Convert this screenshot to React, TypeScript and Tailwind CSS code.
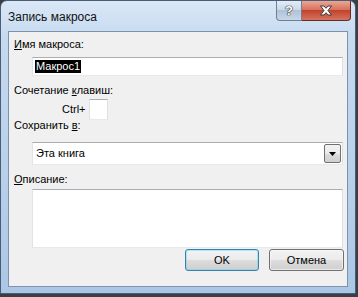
export default function App() {
  return (
    <div className="w-[358px] h-[297px] bg-[#3a3f45] overflow-hidden font-['Liberation_Sans',Arial,sans-serif]">
      <div className="w-[356px] h-[294px] rounded-t-[7px] border border-[#4b5d73] bg-[linear-gradient(180deg,#dae8f6_0%,#c6daf0_12%,#b8d0ea_60%,#abc7e6_100%)] flex flex-col">
        {/* Title bar */}
        <div className="h-[30px] flex items-start shrink-0">
          <div className="pl-[7px] pt-[8px] text-[12px] leading-[16px] text-[#111]">Запись макроса</div>
          <div className="ml-auto mr-[4px] flex">
            <div className="w-[26px] h-[20px] rounded-bl-[4px] border border-[#6f7f92] border-t-0 bg-[linear-gradient(180deg,#e4edf7_0%,#cbd9ea_45%,#b1c2d7_50%,#c8d6e8_100%)] flex items-center justify-center">
              <span className="text-[13px] font-bold leading-none text-white [text-shadow:0_0_1px_#222,0_0_1px_#222,0_0_1px_#222]">?</span>
            </div>
            <div className="w-[49px] h-[20px] rounded-br-[4px] border border-[#6a2a22] border-t-0 border-l-0 bg-[linear-gradient(180deg,#e9a795_0%,#d7735e_45%,#c2422c_50%,#d37661_100%)] flex items-center justify-center">
              <svg width="14" height="11" viewBox="0 0 14 11">
                <path d="M1.5 1h3.5l2 2.3L9 1h3.5L9 5.5l3.5 4.5H9L7 7.7 5 10H1.5L5 5.5z" fill="#fff" stroke="#3a3a3a" strokeWidth="1" strokeLinejoin="round" />
              </svg>
            </div>
          </div>
        </div>
        {/* Client area */}
        <div className="mx-[7px] h-[256px] border border-[#7e93ab] bg-[#f0f0f0] flex flex-col text-[11px] text-black">
          <div className="ml-[5px] mt-[5px] leading-[15px]"><u>И</u>мя макроса:</div>
          <div className="ml-[23px] mt-[5px] w-[311px] h-[19px] border border-[#abadb3] border-b-[#e3e9ef] border-l-[#e2e3ea] border-r-[#dbdfe6] bg-white flex items-center pl-[2px]">
            <span className="bg-black text-white leading-[13px] px-[1px]">Макрос1</span>
          </div>
          <div className="ml-[5px] mt-[7px] leading-[15px]">Сочетание <u>к</u>лавиш:</div>
          <div className="ml-[53px] mt-[1px] flex items-center">
            <span className="leading-[15px]">Ctrl+</span>
            <div className="ml-[3px] w-[19px] h-[21px] border border-[#abadb3] border-b-[#e3e9ef] border-l-[#e2e3ea] border-r-[#dbdfe6] bg-white"></div>
          </div>
          <div className="ml-[5px] -mt-[2px] leading-[15px]">Сохранить <u>в</u>:</div>
          <div className="ml-[23px] mt-[9px] w-[311px] h-[23px] border border-[#abadb3] border-b-[#e3e9ef] border-l-[#e2e3ea] border-r-[#dbdfe6] bg-white flex items-center">
            <span className="pl-[3px] leading-[15px]">Эта книга</span>
            <div className="ml-auto mr-[1px] w-[17px] h-[19px] border border-[#707070] rounded-[2px] bg-[linear-gradient(180deg,#f2f2f2_0%,#ebebeb_50%,#dddddd_50%,#cfcfcf_100%)] flex items-center justify-center">
              <svg width="7" height="4" viewBox="0 0 7 4"><path d="M0 0h7L3.5 4z" fill="#000" /></svg>
            </div>
          </div>
          <div className="ml-[5px] mt-[7px] leading-[15px]"><u>О</u>писание:</div>
          <div className="ml-[23px] mt-[2px] w-[311px] h-[59px] border border-[#abadb3] border-b-[#e3e9ef] border-l-[#e2e3ea] border-r-[#dbdfe6] bg-white"></div>
          <div className="flex mt-[1px] ml-[176px] gap-[10px]">
            <button className="w-[74px] h-[22px] rounded-[3px] border border-[#3c7fb1] bg-[linear-gradient(180deg,#f2f2f2_0%,#ebebeb_50%,#dddddd_50%,#cfcfcf_100%)] shadow-[inset_0_0_0_1px_#48d4fd66] text-[11px] leading-[15px]">OK</button>
            <button className="w-[75px] h-[22px] rounded-[3px] border border-[#707070] bg-[linear-gradient(180deg,#f2f2f2_0%,#ebebeb_50%,#dddddd_50%,#cfcfcf_100%)] shadow-[inset_0_0_0_1px_#fcfcfc99] text-[11px] leading-[15px]">Отмена</button>
          </div>
        </div>
      </div>
    </div>
  );
}
